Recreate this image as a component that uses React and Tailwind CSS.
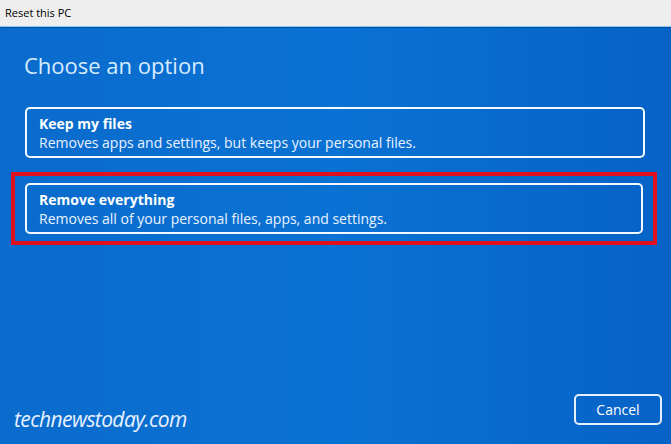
export default function App() {
  return (
    <div className="flex h-[444px] w-[671px] flex-col overflow-hidden font-['Segoe_UI','Open_Sans',sans-serif]">
      <div className="flex h-[26px] shrink-0 items-center bg-[#eeeeee] pl-[5px] text-[11px] text-black">
        Reset this PC
      </div>
      <div className="h-px bg-[#8cc8f0]" />
      <div className="h-px bg-[#0052a8]" />
      <div className="relative flex flex-1 flex-col bg-[linear-gradient(90deg,#0a6bcc_0%,#0a72d4_50%,#0662c6_100%)] px-[24px]">
        <h1 className="mt-[22px] text-[22px] leading-[30px] text-[#d6ecff]">Choose an option</h1>

        <div className="ml-px mt-[27px] flex h-[51px] w-[620px] flex-col justify-center rounded-[5px] border-2 border-[#f4f8ff] px-[12px]">
          <p className="text-[14px] font-bold leading-[19px] text-white">Keep my files</p>
          <p className="text-[14px] leading-[19px] text-[#eaf3ff]">Removes apps and settings, but keeps your personal files.</p>
        </div>

        <div className="-ml-[13px] mt-[14px] w-[646px] border-4 border-[#e0101e] px-[10px] py-[7px]">
          <div className="flex h-[51px] w-[618px] flex-col justify-center rounded-[5px] border-2 border-[#f4f8ff] px-[12px]">
            <p className="text-[14px] font-bold leading-[19px] text-white">Remove everything</p>
            <p className="text-[14px] leading-[19px] text-[#eaf3ff]">Removes all of your personal files, apps, and settings.</p>
          </div>
        </div>

        <div className="mt-auto mb-[19px] flex items-end justify-between">
          <span className="-mb-[10px] -ml-[10px] text-[21px] italic tracking-[-0.6px] text-[#e8f2ff] font-['Open_Sans',sans-serif]">technewstoday.com</span>
          <button className="-mr-[15px] h-[31px] w-[88px] rounded-[5px] border-2 border-[#e4f0ff] text-[14px] text-white">
            Cancel
          </button>
        </div>
      </div>
    </div>
  );
}
